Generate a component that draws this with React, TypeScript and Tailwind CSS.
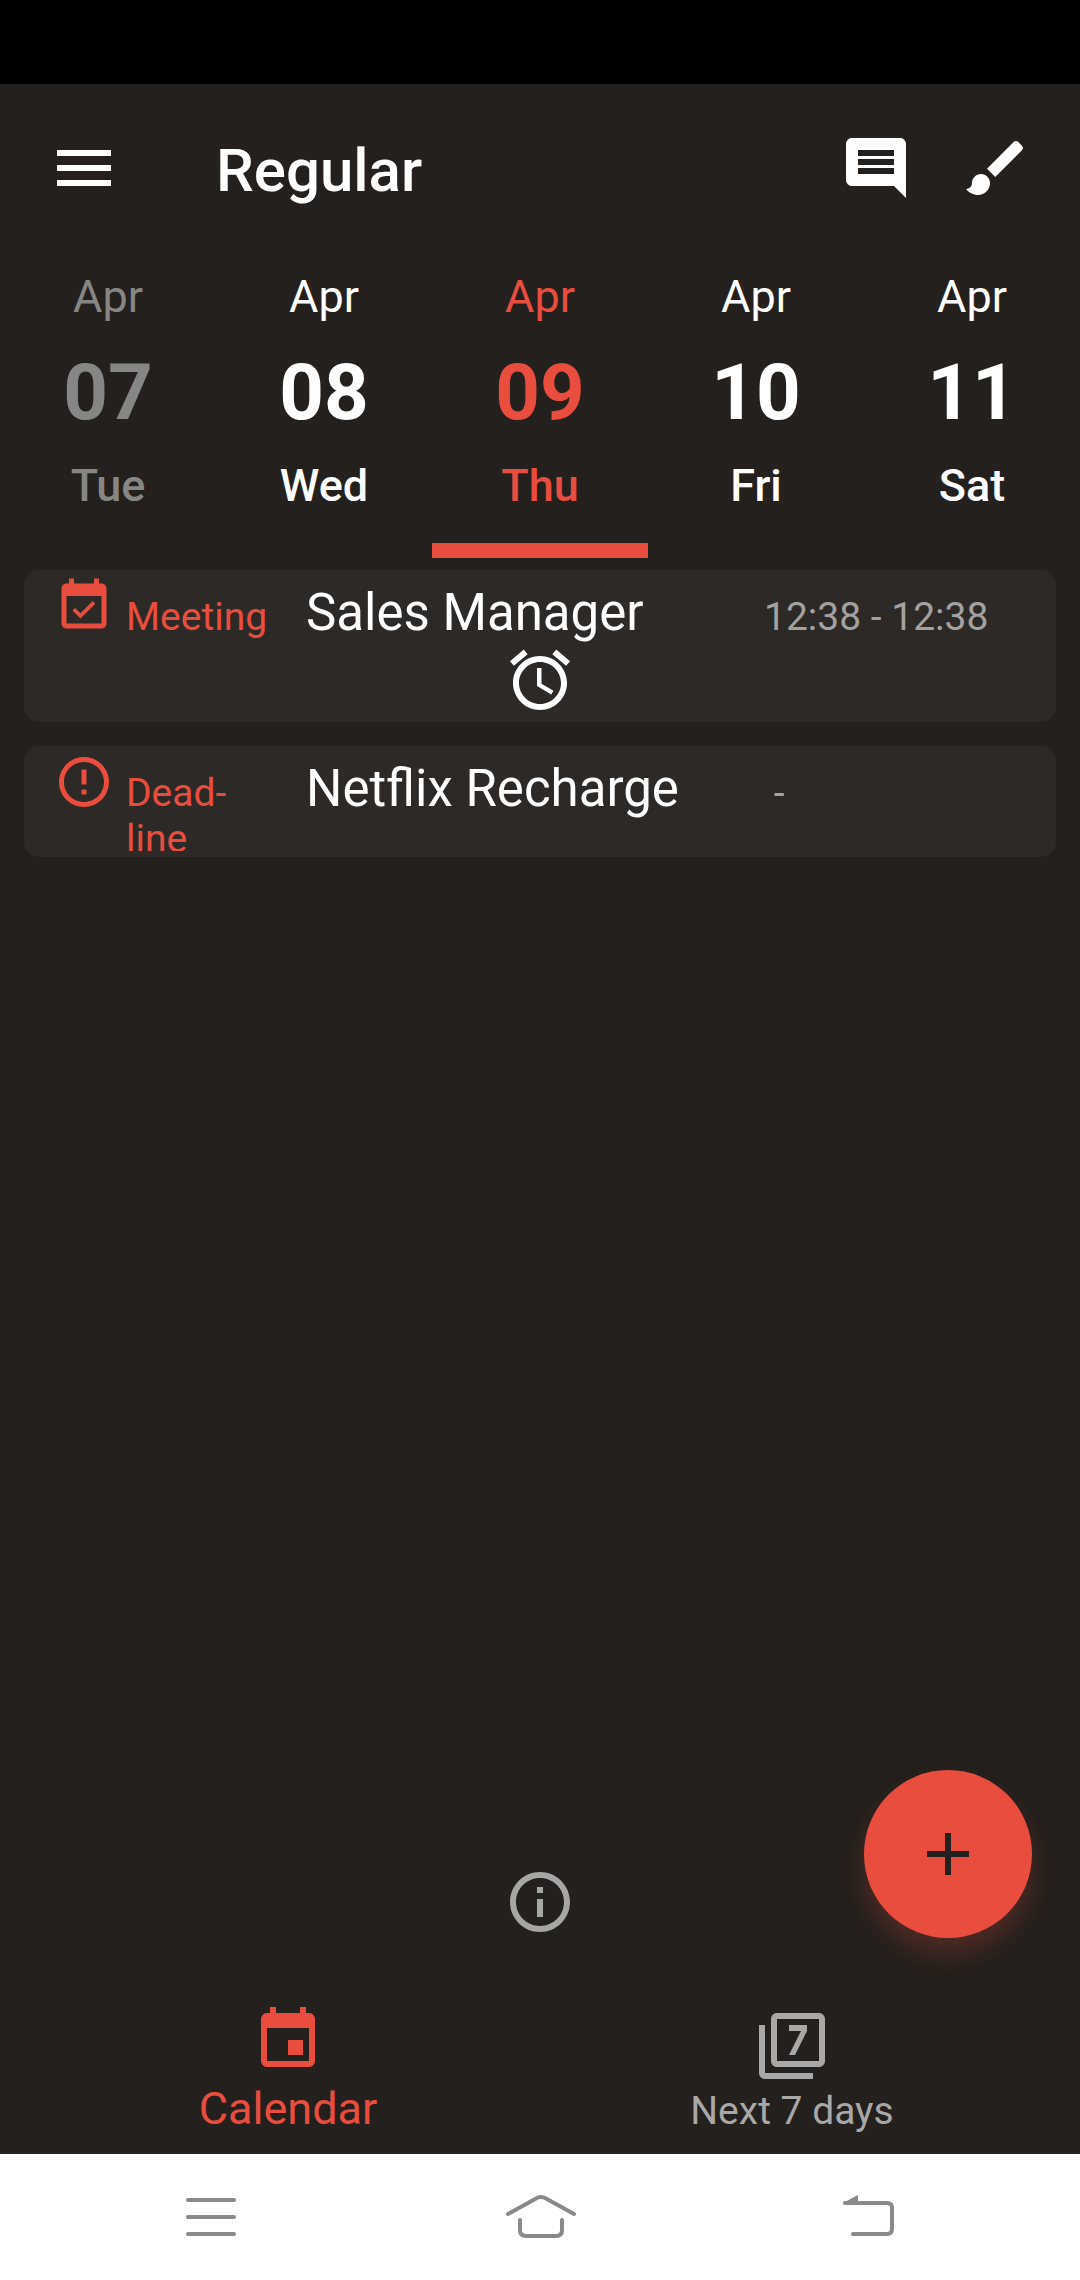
import type { ReactNode } from "react";

type Day = { month: string; date: string; name: string; state: "past" | "normal" | "active" };

const days: Day[] = [
  { month: "Apr", date: "07", name: "Tue", state: "past" },
  { month: "Apr", date: "08", name: "Wed", state: "normal" },
  { month: "Apr", date: "09", name: "Thu", state: "active" },
  { month: "Apr", date: "10", name: "Fri", state: "normal" },
  { month: "Apr", date: "11", name: "Sat", state: "normal" },
];

const dayColor = {
  past: "text-[#868685]",
  normal: "text-white",
  active: "text-[#e94d3d]",
};

function Icon({ d, className }: { d: string; className: string }) {
  return (
    <svg viewBox="0 0 24 24" fill="currentColor" aria-hidden="true" className={className}>
      <path d={d} />
    </svg>
  );
}

const paths = {
  menu: "M3 18h18v-2H3v2zm0-5h18v-2H3v2zm0-7v2h18V6H3z",
  comment:
    "M20 2H4c-1.1 0-2 .9-2 2v12c0 1.1.9 2 2 2h14l4 4V4c0-1.1-.9-2-2-2zm-2 12H6v-2h12v2zm0-3H6V9h12v2zm0-3H6V6h12v2z",
  brush:
    "M7 14c-1.66 0-3 1.34-3 3 0 1.31-1.16 2-2 2 .92 1.22 2.49 2 4 2 2.21 0 4-1.79 4-4 0-1.66-1.34-3-3-3zm13.71-9.37l-1.34-1.34c-.39-.39-1.02-.39-1.41 0L9 12.25 11.75 15l8.96-8.96c.39-.39.39-1.02 0-1.41z",
  meeting:
    "M16.53 11.06L15.47 10l-4.88 4.88-2.12-2.12-1.06 1.06L10.59 17l5.94-5.94zM19 3h-1V1h-2v2H8V1H6v2H5c-1.11 0-1.99.9-1.99 2L3 19c0 1.1.89 2 2 2h14c1.1 0 2-.9 2-2V5c0-1.1-.9-2-2-2zm0 16H5V8h14v11z",
  deadline:
    "M11 15h2v2h-2zm0-8h2v6h-2zm.99-5C6.47 2 2 6.48 2 12s4.47 10 9.99 10C17.52 22 22 17.52 22 12S17.52 2 11.99 2zM12 20c-4.42 0-8-3.58-8-8s3.58-8 8-8 8 3.58 8 8-3.58 8-8 8z",
  alarm:
    "M22 5.72l-4.6-3.86-1.29 1.53 4.6 3.86L22 5.72zM7.88 3.39L6.6 1.86 2 5.71l1.29 1.53 4.59-3.85zM12.5 8H11v6l4.75 2.85.75-1.23-4-2.37V8zM12 4c-4.97 0-9 4.03-9 9s4.02 9 9 9c4.97 0 9-4.03 9-9s-4.03-9-9-9zm0 16c-3.87 0-7-3.13-7-7s3.13-7 7-7 7 3.13 7 7-3.13 7-7 7z",
  info: "M11 7h2v2h-2zm0 4h2v6h-2zm1-9C6.48 2 2 6.48 2 12s4.48 10 10 10 10-4.48 10-10S17.52 2 12 2zm0 18c-4.41 0-8-3.59-8-8s3.59-8 8-8 8 3.59 8 8-3.59 8-8 8z",
  plus: "M19 13h-6v6h-2v-6H5v-2h6V5h2v6h6v2z",
  calendar:
    "M17 12h-5v5h5v-5zM16 1v2H8V1H6v2H5c-1.11 0-1.99.9-1.99 2L3 19c0 1.1.89 2 2 2h14c1.1 0 2-.9 2-2V5c0-1.1-.9-2-2-2h-1V1h-2zm3 18H5V8h14v11z",
  sevenDays:
    "M3 5H1v16c0 1.1.9 2 2 2h16v-2H3V5zm18-4H7c-1.1 0-2 .9-2 2v14c0 1.1.9 2 2 2h14c1.1 0 2-.9 2-2V3c0-1.1-.9-2-2-2zm0 16H7V3h14v14zm-8-2l4-8V5h-6v2h4l-4 8h2z",
};

function EventCard({
  icon,
  label,
  title,
  time,
  children,
}: {
  icon: string;
  label: ReactNode;
  title: string;
  time: string;
  children?: ReactNode;
}) {
  return (
    <li className="rounded-[15px] bg-[#2d2926] px-[30px] py-[6px]">
      <div className="flex max-h-[99px] overflow-hidden">
        <Icon d={icon} className="size-[60px] shrink-0 text-[#e94d3d]" />
        <p className="w-[180px] shrink-0 pt-[18px] pl-3 text-[39px] leading-[46px] text-[#e94d3d]">{label}</p>
        <h2 className="h-[68px] min-w-0 flex-1 truncate pt-[7px] pl-3 text-[51px] leading-[60px] text-white">
          {title}
        </h2>
        <p className="w-[262px] shrink-0 pt-[18px] text-[39px] leading-[46px] whitespace-pre text-[#a3a2a1]">
          {time}
        </p>
      </div>
      {children}
    </li>
  );
}

export default function App() {
  return (
    <div className="flex min-h-screen flex-col bg-[#24201d] font-[Roboto,sans-serif] text-white">
      <div className="h-[84px] bg-black" />

      <header className="flex h-[168px] items-center px-12 shadow-[0_2px_6px_rgba(0,0,0,0.08)]">
        <button aria-label="Open menu">
          <Icon d={paths.menu} className="size-[72px]" />
        </button>
        <h1 className="flex-1 pt-[6px] pl-24 text-[60px] leading-[70px] font-medium">Regular</h1>
        <div className="flex gap-12">
          <button aria-label="Notes">
            <Icon d={paths.comment} className="size-[72px]" />
          </button>
          <button aria-label="Theme">
            <Icon d={paths.brush} className="size-[72px]" />
          </button>
        </div>
      </header>

      <nav aria-label="Days" className="grid grid-cols-5">
        {days.map((day) => (
          <button key={day.date} className={`flex flex-col items-center pt-[18px] ${dayColor[day.state]}`}>
            <span className="text-[45px] leading-[53px]">{day.month}</span>
            <span className="mt-6 text-[78px] leading-[92px] font-bold">{day.date}</span>
            <span className="mt-5 text-[45px] leading-[53px] font-medium">{day.name}</span>
            <span
              className={
                day.state === "active" ? "mt-[31px] h-[15px] w-full bg-[#e94d3d]" : "mt-[31px] h-[15px] w-full"
              }
            />
          </button>
        ))}
      </nav>

      <main className="relative flex flex-1 flex-col items-center pb-12">
        <ul className="flex w-full flex-col gap-6 px-6 pt-3">
          <EventCard icon={paths.meeting} label="Meeting" title="Sales Manager" time="12:38 - 12:38">
            <Icon d={paths.alarm} className="mx-auto size-[72px]" />
          </EventCard>
          <EventCard
            icon={paths.deadline}
            label={
              <>
                Dead-
                <br />
                line
              </>
            }
            title="Netflix Recharge"
            time=" - "
          />
        </ul>

        <button aria-label="Information" className="mt-auto text-[#a6a6a5]">
          <Icon d={paths.info} className="size-[72px]" />
        </button>
        <button
          aria-label="Add event"
          className="absolute right-12 bottom-12 flex size-[168px] items-center justify-center rounded-full bg-[#e94d3d] text-[#24201d] shadow-[0_16px_24px_rgba(233,77,61,0.22)]"
        >
          <Icon d={paths.plus} className="size-[72px]" />
        </button>
      </main>

      <nav aria-label="Views" className="grid h-[168px] grid-cols-2 px-9">
        <button className="flex flex-col items-center pt-[18px] text-[#e94d3d]">
          <Icon d={paths.calendar} className="size-[72px]" />
          <span className="mt-[6px] text-[45px] leading-[53px]">Calendar</span>
        </button>
        <button className="flex flex-col items-center pt-[24px] text-[#a9a8a8]">
          <Icon d={paths.sevenDays} className="size-[72px]" />
          <span className="mt-[6px] text-[39px] leading-[46px]">Next 7 days</span>
        </button>
      </nav>

      <footer className="flex h-[126px] items-center justify-between bg-white px-[174px] text-[#8a8a8a]">
        <button aria-label="Recent apps">
          <svg viewBox="0 0 72 72" fill="none" stroke="currentColor" strokeWidth="4" strokeLinecap="round" className="size-[72px]">
            <path d="M14 19h46M14 36h46M14 53h46" />
          </svg>
        </button>
        <button aria-label="Home">
          <svg viewBox="0 0 72 72" fill="none" stroke="currentColor" strokeWidth="4" strokeLinecap="round" className="size-[72px]">
            <path d="M4 33L32 17.500Q37 14.500 42 17.500L70 33M16 39V49Q16 55 22 55H52Q58 55 58 49V39" />
          </svg>
        </button>
        <button aria-label="Back">
          <svg viewBox="0 0 72 72" fill="none" stroke="currentColor" strokeWidth="4" strokeLinecap="round" className="size-[72px]">
            <path d="M11 22H53Q58 22 58 27V48Q58 53 53 53H19" />
            <path d="M9 22L23 14.500Q24 14 24 15V22Z" fill="currentColor" stroke="none" />
          </svg>
        </button>
      </footer>
    </div>
  );
}
